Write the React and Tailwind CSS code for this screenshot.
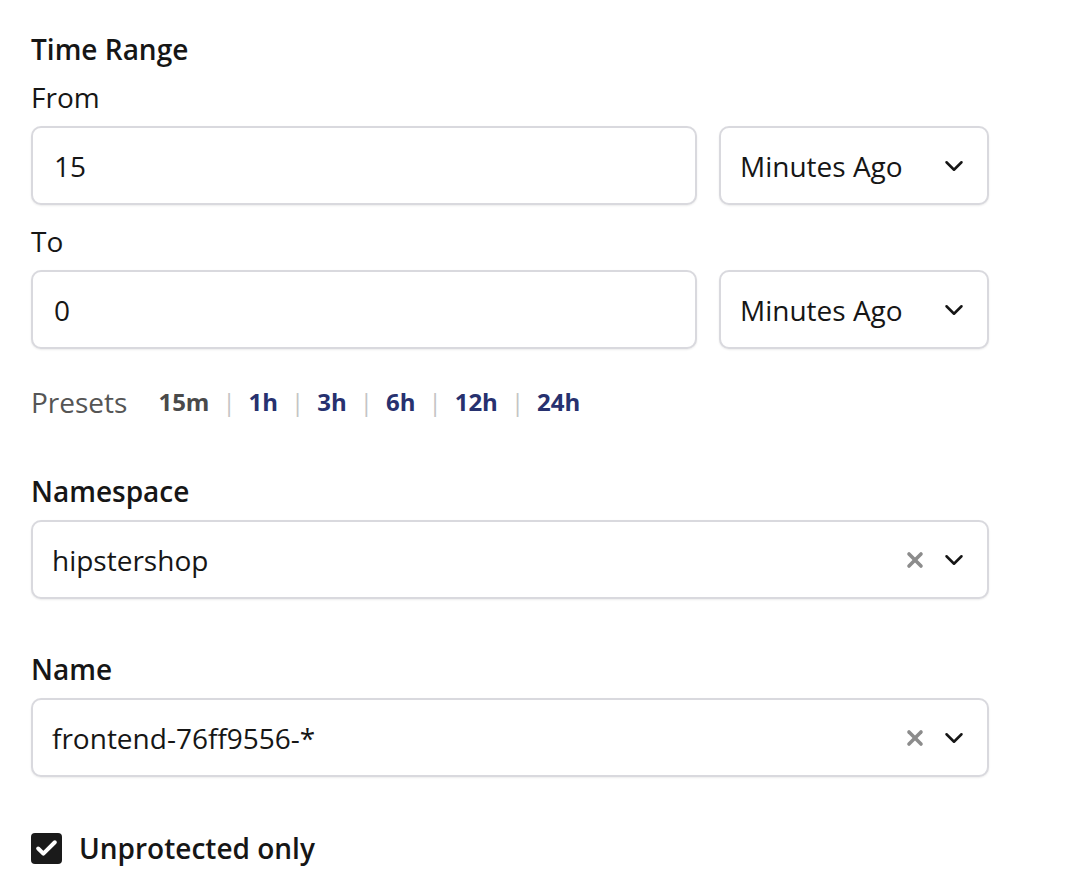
import { ChevronDown, X, Check } from "lucide-react";

const font = { fontFamily: '"Open Sans", "DejaVu Sans", sans-serif' };

// shared box styling for inputs / selects
const boxClass =
  "h-[79px] rounded-[10px] border-2 border-[#d9d9de] bg-white shadow-[0_1px_2px_rgba(0,0,0,0.08)] flex items-center text-[28px] text-[#161616]";

function Label({ children, bold = false, className = "" }) {
  return (
    <div
      className={`h-[40px] leading-[40px] text-[28px] text-[#161616] ${
        bold ? "font-semibold" : "font-normal"
      } ${className}`}
    >
      {children}
    </div>
  );
}

function TimeRow({ value }) {
  return (
    <div className="flex gap-[22px] mt-[9px]">
      <div className={`${boxClass} flex-1 pl-[21px]`}>{value}</div>
      <div className={`${boxClass} w-[270px] pl-[19px] pr-[18px] justify-between`}>
        <span>Minutes Ago</span>
        <ChevronDown size={30} strokeWidth={2} />
      </div>
    </div>
  );
}

function ComboBox({ value }) {
  return (
    <div className={`${boxClass} mt-[9px] pl-[19px] pr-[18px] justify-between`}>
      <span>{value}</span>
      <div className="flex items-center gap-[12px]">
        <X size={24} strokeWidth={3.6} className="text-[#8c8c8c]" />
        <ChevronDown size={30} strokeWidth={2} />
      </div>
    </div>
  );
}

const presets = ["15m", "1h", "3h", "6h", "12h", "24h"];

export default function App() {
  return (
    <div className="min-h-screen bg-white pt-[29px] pl-[31px]" style={font}>
      <div className="w-[958px]">
        <Label bold>Time Range</Label>
        <Label className="mt-[8px]">From</Label>
        <TimeRow value="15" />

        <Label className="mt-[16px]">To</Label>
        <TimeRow value="0" />

        {/* PRESETS */}
        <div className="mt-[33px] h-[40px] flex items-center">
          <span className="text-[#555555] text-[28px] mr-[31px]">Presets</span>
          {presets.map((p, i) => (
            <span key={p} className="flex items-center">
              {i > 0 && <span className="text-[#c4c4c4] mx-[13px] text-[24px]">|</span>}
              <span
                className={`font-bold text-[24px] ${
                  i === 0 ? "text-[#4a4a4a]" : "text-[#27316f]"
                }`}
              >
                {p}
              </span>
            </span>
          ))}
        </div>

        <Label bold className="mt-[49px]">Namespace</Label>
        <ComboBox value="hipstershop" />

        <Label bold className="mt-[50px]">Name</Label>
        <ComboBox value="frontend-76ff9556-*" />

        {/* CHECKBOX */}
        <div className="mt-[56px] h-[31px] flex items-center gap-[17px]">
          <div className="w-[31px] h-[31px] rounded-[4px] bg-[#1a1a1a] flex items-center justify-center">
            <Check size={25} strokeWidth={3.8} className="text-white" />
          </div>
          <span className="text-[28px] leading-[31px] font-semibold text-[#161616]">Unprotected only</span>
        </div>
      </div>
    </div>
  );
}
